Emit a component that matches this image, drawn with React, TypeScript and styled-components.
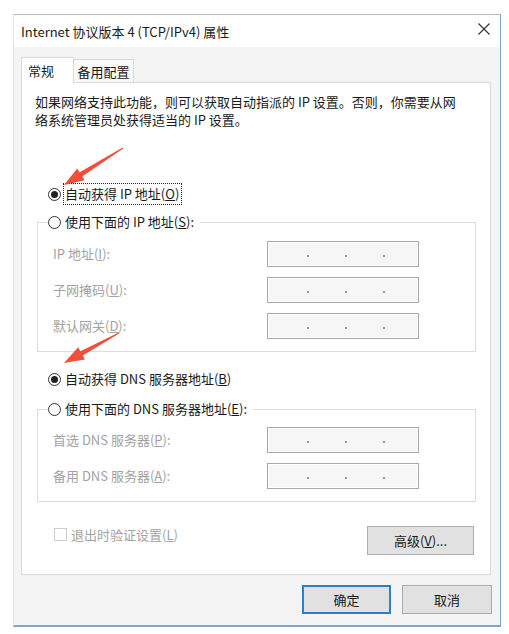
import React from "react";
import styled, { createGlobalStyle } from "styled-components";

const Global = createGlobalStyle`
  html, body { margin: 0; padding: 0; background: #ffffff; }
  body {
    font-family: "Noto Sans CJK SC", "Noto Sans", sans-serif;
    font-size: 13px;
    color: #1a1a1a;
  }
  #root { position: relative; width: 509px; height: 634px; overflow: hidden; }
`;

const Page = styled.div`
  padding: 14px 0 0 13px;
`;

const Window = styled.div`
  width: 488px;
  height: 613px;
  box-sizing: border-box;
  border-top: 1px solid #a9c0d3;
  border-left: 1px solid #e2e2e2;
  border-right: 1px solid #7fa6c6;
  border-bottom: 2px solid #7fa6c6;
  display: flex;
  flex-direction: column;
  background: #f4f4f4;
`;

const TitleBar = styled.div`
  height: 32px;
  flex: none;
  background: #ffffff;
  display: flex;
  align-items: center;
  justify-content: space-between;
  padding: 0 10px 0 7px;
`;

const TitleText = styled.span`
  font-size: 13px;
  line-height: 18px;
  color: #1a1a1a;
  margin-top: 1px;
`;

const CloseButton = styled.span`
  display: flex;
  width: 12px;
  height: 12px;
  margin-top: -4px;
`;

const Body = styled.div`
  flex: 1;
  padding: 10px 8px 0 7px;
  display: flex;
  flex-direction: column;
`;

const TabStrip = styled.div`
  display: flex;
  align-items: flex-end;
  height: 25px;
`;

const Tab = styled.div<{ $active?: boolean }>`
  position: relative;
  z-index: ${(p) => (p.$active ? 1 : 0)};
  box-sizing: border-box;
  height: ${(p) => (p.$active ? "26px" : "23px")};
  margin-bottom: ${(p) => (p.$active ? "-1px" : "0")};
  width: ${(p) => (p.$active ? "53px" : "60px")};
  border: 1px solid #d9d9d9;
  border-bottom: none;
  border-left: ${(p) => (p.$active ? "1px solid #d9d9d9" : "none")};
  background: ${(p) => (p.$active ? "#ffffff" : "#f9f9f9")};
  display: flex;
  align-items: center;
  justify-content: ${(p) => (p.$active ? "flex-start" : "center")};
  padding: ${(p) => (p.$active ? "0 0 0 6px" : "1px 0 0 0")};
  font-size: 13px;
  line-height: 18px;
`;

const Panel = styled.div`
  box-sizing: border-box;
  width: 470px;
  height: 493px;
  background: #ffffff;
  border: 1px solid #d9d9d9;
  padding: 10px 14px 0 13px;
  display: flex;
  flex-direction: column;
`;

const Description = styled.p`
  margin: 0;
  line-height: 18px;
  font-size: 13px;
`;

const RadioRow = styled.div<{ $mt?: number }>`
  display: flex;
  align-items: center;
  height: 20px;
  margin-top: ${(p) => p.$mt ?? 0}px;
  margin-left: 13px;
`;

const RadioCircle = styled.span<{ $checked?: boolean }>`
  box-sizing: border-box;
  width: 13px;
  height: 13px;
  flex: none;
  border-radius: 50%;
  border: 1px solid #333333;
  background: #ffffff;
  display: flex;
  align-items: center;
  justify-content: center;
  &::after {
    content: "";
    display: ${(p) => (p.$checked ? "block" : "none")};
    width: 7px;
    height: 7px;
    border-radius: 50%;
    background: #222222;
  }
`;

const RadioLabel = styled.span<{ $focused?: boolean }>`
  margin-left: 3px;
  padding: ${(p) => (p.$focused ? "1px 2px 1px 1px" : "0 2px 0 1px")};
  line-height: 18px;
  outline: ${(p) => (p.$focused ? "1px dotted #222" : "none")};
  outline-offset: 0px;
  white-space: nowrap;
`;

const Group = styled.fieldset<{ $pt: number; $mt: number }>`
  margin: ${(p) => p.$mt}px 0 0 2px;
  padding: ${(p) => p.$pt}px 0 12px 15px;
  border: 1px solid #dcdcdc;
  min-width: 0;
  display: grid;
  grid-template-columns: 214px 152px;
  row-gap: 10px;
  align-items: center;
`;

const Legend = styled.legend`
  padding: 0 4px 0 0;
  margin-left: -5px;
  display: flex;
  align-items: center;
  height: 18px;
  line-height: 18px;
`;

const FieldLabel = styled.span`
  color: #a2a2a2;
  line-height: 18px;
  white-space: nowrap;
`;

const IpBox = styled.div`
  box-sizing: border-box;
  width: 152px;
  height: 26px;
  border: 1px solid #a8a8a8;
  box-shadow: inset 0 0 0 1px #ffffff;
  background: #f6f6f6;
  display: flex;
  align-items: center;
  padding-left: 3px;
`;

const IpSegment = styled.span`
  width: 36px;
  flex: none;
`;

const IpDot = styled.span`
  width: 2px;
  height: 2px;
  margin-top: 3px;
  flex: none;
  background: #9a9a9a;
`;

const BottomRow = styled.div`
  display: flex;
  justify-content: space-between;
  align-items: flex-start;
  margin-top: 24px;
`;

const CheckRow = styled.label`
  display: flex;
  align-items: center;
  margin-left: 19px;
  height: 16px;
  margin-top: 0px;
  color: #a2a2a2;
`;

const CheckBox = styled.span`
  box-sizing: border-box;
  width: 13px;
  height: 13px;
  border: 1px solid #cccccc;
  background: #ffffff;
  margin-right: 4px;
`;

const Button = styled.button<{ $w: number; $default?: boolean }>`
  box-sizing: border-box;
  width: ${(p) => p.$w}px;
  height: 29px;
  margin: 0;
  padding: 0;
  font-family: "Noto Sans CJK SC", "Noto Sans", sans-serif;
  font-size: 13px;
  line-height: 18px;
  color: #1a1a1a;
  background: #e1e1e1;
  border: ${(p) => (p.$default ? "2px solid #2f7fc4" : "1px solid #adadad")};
`;

const AdvancedButton = styled(Button)`
  margin-right: 2px;
`;

const Footer = styled.div`
  display: flex;
  justify-content: flex-end;
  gap: 11px;
  margin-top: 10px;
`;

const Overlay = styled.svg`
  position: absolute;
  left: 0;
  top: 0;
  pointer-events: none;
`;

const IpInput = () => (
  <IpBox>
    <IpSegment />
    <IpDot />
    <IpSegment />
    <IpDot />
    <IpSegment />
    <IpDot />
  </IpBox>
);

export default function App() {
  return (
    <>
      <Global />
      <Page>
        <Window>
          <TitleBar>
            <TitleText>Internet 协议版本 4 (TCP/IPv4) 属性</TitleText>
            <CloseButton>
              <svg width="12" height="12" viewBox="0 0 12 12">
                <path d="M0.5 0.5 L11.5 11.5 M11.5 0.5 L0.5 11.5" stroke="#333" strokeWidth="1.1" fill="none" />
              </svg>
            </CloseButton>
          </TitleBar>
          <Body>
            <TabStrip>
              <Tab $active>常规</Tab>
              <Tab>备用配置</Tab>
            </TabStrip>
            <Panel>
              <Description>
                如果网络支持此功能，则可以获取自动指派的 IP 设置。否则，你需要从网
                <br />
                络系统管理员处获得适当的 IP 设置。
              </Description>

              <RadioRow $mt={55}>
                <RadioCircle $checked />
                <RadioLabel $focused>
                  自动获得 IP 地址(<u>O</u>)
                </RadioLabel>
              </RadioRow>

              <Group $pt={10} $mt={9}>
                <Legend>
                  <RadioCircle />
                  <RadioLabel>
                    使用下面的 IP 地址(<u>S</u>):
                  </RadioLabel>
                </Legend>
                <FieldLabel>
                  IP 地址(<u>I</u>):
                </FieldLabel>
                <IpInput />
                <FieldLabel>
                  子网掩码(<u>U</u>):
                </FieldLabel>
                <IpInput />
                <FieldLabel>
                  默认网关(<u>D</u>):
                </FieldLabel>
                <IpInput />
              </Group>

              <RadioRow $mt={17}>
                <RadioCircle $checked />
                <RadioLabel>
                  自动获得 DNS 服务器地址(<u>B</u>)
                </RadioLabel>
              </RadioRow>

              <Group $pt={9} $mt={11}>
                <Legend>
                  <RadioCircle />
                  <RadioLabel>
                    使用下面的 DNS 服务器地址(<u>E</u>):
                  </RadioLabel>
                </Legend>
                <FieldLabel>
                  首选 DNS 服务器(<u>P</u>):
                </FieldLabel>
                <IpInput />
                <FieldLabel>
                  备用 DNS 服务器(<u>A</u>):
                </FieldLabel>
                <IpInput />
              </Group>

              <BottomRow>
                <CheckRow>
                  <CheckBox />
                  退出时验证设置(<u>L</u>)
                </CheckRow>
                <AdvancedButton $w={107}>
                  高级(<u>V</u>)...
                </AdvancedButton>
              </BottomRow>
            </Panel>
            <Footer>
              <Button $w={89} $default>
                确定
              </Button>
              <Button $w={90}>取消</Button>
            </Footer>
          </Body>
        </Window>
      </Page>
      <Overlay width="509" height="634" viewBox="0 0 509 634">
        <polygon
          fill="#f0503a"
          points="122.7,147.6 79.6,172.3 77.2,168.5 64,185 84.6,180.3 82.2,176.5 123.3,148.4"
        />
        <polygon
          fill="#f0503a"
          points="118.8,332.6 80.4,351.2 78.2,347.3 64,363 84.9,359.5 82.8,355.6 119.2,333.4"
        />
      </Overlay>
    </>
  );
}
